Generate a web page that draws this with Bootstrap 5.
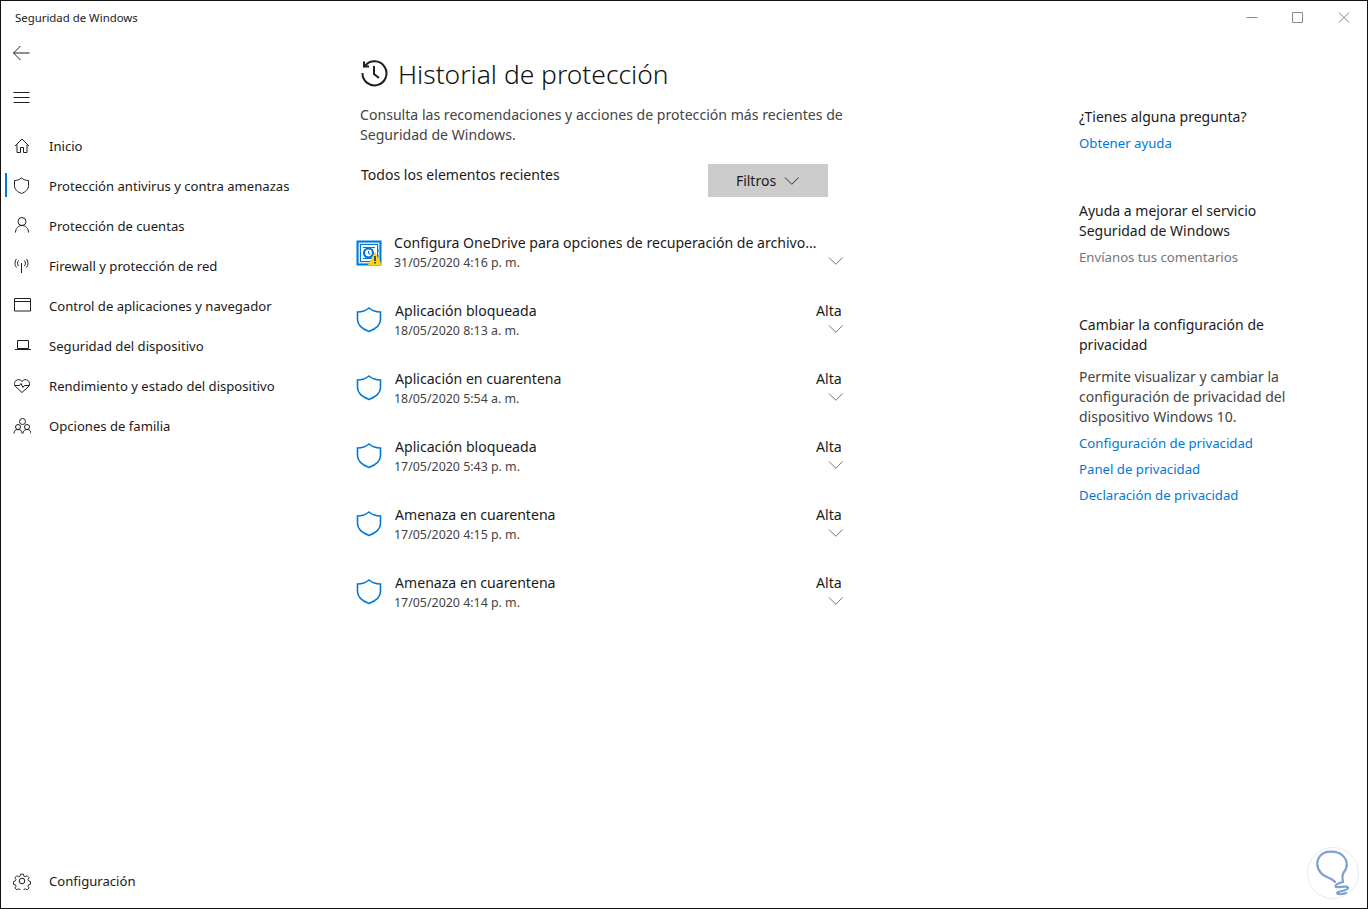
<!doctype html>
<html lang="es"><head><meta charset="utf-8"><title>Seguridad de Windows</title>
<link href="https://cdn.jsdelivr.net/npm/bootstrap@5.3.0/dist/css/bootstrap.min.css" rel="stylesheet">
<style>
html,body{height:100%;margin:0;background:#fff}
body{font-family:"Noto Sans","Open Sans",sans-serif;font-size:13.1px;color:#1a1a1a;overflow:hidden}
.win{width:1368px;height:909px;border:1px solid #111;position:relative}
svg{display:block;fill:none;stroke-width:1}
.tbar{height:30px;padding-left:14px;font-size:11.4px;padding-top:9px;line-height:16px}
.winbtns{position:absolute;right:0;top:0;height:34px}
.winbtns svg{stroke:#8a8a8a}
.side{width:345px;flex:none}
.sicon{stroke:#1f1f1f}
.topbtn{height:44px;padding-left:11px}
.navlist{margin-top:7px}
.navrow{height:40px;position:relative;padding:10px 0 0 48px;line-height:20px}
.navico{position:absolute;left:12px;top:11px;width:18px;height:18px}
.navrow.on::before{content:"";position:absolute;left:4px;top:7px;width:2px;height:24px;background:#0078d7}
.navfoot{position:absolute;left:0;bottom:7px;width:100%}
.ctr{width:700px;flex:none;padding-left:14px;padding-top:22px}
.pgtitle{font-size:26.4px;line-height:36px;font-weight:300;color:#111;margin:0;padding-top:3px}
.ttl{gap:10px}
.ttlico{stroke-width:2}
.sub{width:500px;line-height:20px;color:#444;margin:13px 0 0;font-size:14.1px}
.filtbtn{width:120px;height:33px;background:#ccc;border:0;border-radius:0;color:#1a1a1a;font-size:14px;padding:0;margin-left:auto}
.filtrow{width:468px;margin-top:19px}
.lbl{font-size:14.050px;line-height:20px;padding:1px 0 0 1px}
.rows{margin-top:36px}
.item{width:488px;height:68px;position:relative;padding-left:35px}
.item.first{padding-left:34px}
.item .nm{font-size:14.1px;line-height:20px}
.item .dt{font-size:12.4px;line-height:20px;color:#444;margin-left:-1px}
.item.first .dt{margin-left:0}
.sev{position:absolute;left:456px;top:0;font-size:14.2px;line-height:20px}
.chev{position:absolute;left:468px;top:23px;stroke:#767676}
.ishield{position:absolute;left:-4px;top:6px;stroke:#0078d7}
.shld{stroke-width:1.6;top:5px}
.rcol{width:260px;flex:none;margin-left:33px;padding-top:76px;font-size:14px;line-height:20px}
.rcol a{color:#0078d7;text-decoration:none;display:block;height:26px;line-height:26px;font-size:13.2px}
.rcol .gr{color:#767676;font-size:13.2px;height:26px;line-height:26px;margin-top:3px}
.rcol .ds{color:#444;margin-top:12px}
.rcol .lk1{margin-top:3px}
.blk{margin-bottom:45px}
.wm{position:absolute;left:1306px;top:846px}
</style></head><body>
<div class="win">
 <div class="tbar">Seguridad de Windows</div>
 <div class="winbtns d-flex">
  <svg width="148" height="34" viewBox="0 0 148 34"><path d="M27.500 16.500h11M73.500 11.500h10v10h-10zM120 11.500l10 10M130 11.500l-10 10"/></svg>
 </div>
 <div class="d-flex">
  <div class="side">
   <div class="topbtn d-flex align-items-center"><svg class="sicon" width="18" height="18" viewBox="0 0 18 18"><path d="M1.500 9h16M8.500 2l-7 7 7 7"/></svg></div>
   <div class="topbtn d-flex align-items-center"><svg class="sicon" width="18" height="18" viewBox="0 0 18 18"><path d="M1.500 4.500h16M1.500 9.500h16M1.500 14.500h16"/></svg></div>
   <div class="navlist">
    <div class="navrow"><svg class="navico sicon" viewBox="0 0 18 18"><path d="M2 9 9 2l7 7M4 7.500V15.500H7.500V10.500h3v5H14V7.500"/></svg>Inicio</div>
    <div class="navrow on"><svg class="navico sicon" viewBox="0 0 18 18"><path d="M8.500 1C6.500 2.700 4 3.500 1.500 3.500v5c0 4 3 6.500 7 8 4-1.500 7-4 7-8v-5c-2.500 0-5-.8-7-2.500z"/></svg>Protección antivirus y contra amenazas</div>
    <div class="navrow"><svg class="navico sicon" viewBox="0 0 18 18"><circle cx="9" cy="4.500" r="4"/><path d="M2.500 15.500c0-4 3-7 6.500-7s6.500 3 6.500 7"/></svg>Protección de cuentas</div>
    <div class="navrow"><svg class="navico sicon" viewBox="0 0 18 18"><path d="M8.500 6v10M5.500 3.500c-1.200 1.500-1.200 4 0 5.500M3.500 2c-2 2.500-2 6 0 8.500M11.500 3.500c1.200 1.500 1.200 4 0 5.500M13.500 2c2 2.500 2 6 0 8.500"/></svg>Firewall y protección de red</div>
    <div class="navrow"><svg class="navico sicon" viewBox="0 0 18 18"><path d="M1.500 1.500h16v12.500h-16zM1.500 4.500h16"/></svg>Control de aplicaciones y navegador</div>
    <div class="navrow"><svg class="navico sicon" viewBox="0 0 18 18"><path d="M4.500 3.500h11v8h-11zM2 12.500h16"/></svg>Seguridad del dispositivo</div>
    <div class="navrow"><svg class="navico sicon" viewBox="0 0 18 18"><path d="M9 15.500 3 10C1 8 1 5 3 3.500c2-1.500 4.500-1 6 1 1.500-2 4-2.500 6-1 2 1.500 2 4.500 0 6.500zM1.500 8.500h5l1.500-2 2 4 1.500-2h5"/></svg>Rendimiento y estado del dispositivo</div>
    <div class="navrow"><svg class="navico sicon" viewBox="0 0 18 18"><circle cx="9.500" cy="4.500" r="3"/><circle cx="5" cy="10" r="2.500"/><circle cx="14" cy="10" r="2.500"/><path d="M1 16.500c0-2.500 1.500-4 4-4s4 1.500 4 4M10 16.500c0-2.500 1.500-4 4-4s4 1.500 4 4"/></svg>Opciones de familia</div>
   </div>
  </div>
  <div class="ctr">
   <div class="ttl d-flex align-items-center">
    <svg class="sicon ttlico" width="28" height="28" viewBox="0 0 28 28"><path d="M5 7A12 12 0 1 1 2.500 14M4 2.500V7.500H9M14 7v8l5 4"/></svg>
    <h1 class="pgtitle">Historial de protección</h1>
   </div>
   <p class="sub">Consulta las recomendaciones y acciones de protección más recientes de Seguridad de Windows.</p>
   <div class="filtrow d-flex align-items-start">
    <div class="lbl">Todos los elementos recientes</div>
    <button class="filtbtn btn d-flex align-items-center justify-content-center gap-2">Filtros <svg width="16" height="10" viewBox="0 0 16 10" stroke="#333"><path d="M1 1.500 7.800 8.300l6.800-6.800"/></svg></button>
   </div>
   <div class="rows">
    <div class="item first">
     <svg class="ishield" width="28" height="28" viewBox="0 0 28 28"><rect x="1.500" y="2.500" width="23" height="23" fill="#cfe6f8" stroke-width="2"/><rect x="4.500" y="5.500" width="17" height="17" fill="#fff"/><path d="M7 8.500h12M7 19.500h12M22 10v3M22 16v3" /><circle cx="12.500" cy="14" r="4.500" stroke-width="2.200"/><path d="M12.500 12v2.500l2 1" stroke-width="1"/><path d="M19 13 12 26h14z" fill="#fcd116" stroke="none"/><path d="M19 17v5M19 23v1.500" stroke="#222" stroke-width="1.500"/></svg>
     <div class="nm">Configura OneDrive para opciones de recuperación de archivo...</div><div class="dt">31/05/2020 4:16 p. m.</div>
     <svg class="chev" width="16" height="10" viewBox="0 0 16 10"><path d="M1 1.500 7.800 8.300l6.800-6.800"/></svg>
    </div>
    <div class="item"><svg class="ishield shld" width="28" height="28" viewBox="0 0 28 28"><path d="M13 2C10 4.500 5.500 6 1.500 6v7.500c0 5.500 5 9.500 11.500 12 6.500-2.500 11.500-6.500 11.500-12V6C20.500 6 16 4.500 13 2z"/></svg><div class="nm">Aplicación bloqueada</div><div class="dt">18/05/2020 8:13 a. m.</div><div class="sev">Alta</div><svg class="chev" width="16" height="10" viewBox="0 0 16 10"><path d="M1 1.500 7.800 8.300l6.800-6.800"/></svg></div>
    <div class="item"><svg class="ishield shld" width="28" height="28" viewBox="0 0 28 28"><path d="M13 2C10 4.500 5.500 6 1.500 6v7.500c0 5.500 5 9.500 11.500 12 6.500-2.500 11.500-6.500 11.500-12V6C20.500 6 16 4.500 13 2z"/></svg><div class="nm">Aplicación en cuarentena</div><div class="dt">18/05/2020 5:54 a. m.</div><div class="sev">Alta</div><svg class="chev" width="16" height="10" viewBox="0 0 16 10"><path d="M1 1.500 7.800 8.300l6.800-6.800"/></svg></div>
    <div class="item"><svg class="ishield shld" width="28" height="28" viewBox="0 0 28 28"><path d="M13 2C10 4.500 5.500 6 1.500 6v7.500c0 5.500 5 9.500 11.500 12 6.500-2.500 11.500-6.500 11.500-12V6C20.500 6 16 4.500 13 2z"/></svg><div class="nm">Aplicación bloqueada</div><div class="dt">17/05/2020 5:43 p. m.</div><div class="sev">Alta</div><svg class="chev" width="16" height="10" viewBox="0 0 16 10"><path d="M1 1.500 7.800 8.300l6.800-6.800"/></svg></div>
    <div class="item"><svg class="ishield shld" width="28" height="28" viewBox="0 0 28 28"><path d="M13 2C10 4.500 5.500 6 1.500 6v7.500c0 5.500 5 9.500 11.500 12 6.500-2.500 11.500-6.500 11.500-12V6C20.500 6 16 4.500 13 2z"/></svg><div class="nm">Amenaza en cuarentena</div><div class="dt">17/05/2020 4:15 p. m.</div><div class="sev">Alta</div><svg class="chev" width="16" height="10" viewBox="0 0 16 10"><path d="M1 1.500 7.800 8.300l6.800-6.800"/></svg></div>
    <div class="item"><svg class="ishield shld" width="28" height="28" viewBox="0 0 28 28"><path d="M13 2C10 4.500 5.500 6 1.500 6v7.500c0 5.500 5 9.500 11.500 12 6.500-2.500 11.500-6.500 11.500-12V6C20.500 6 16 4.500 13 2z"/></svg><div class="nm">Amenaza en cuarentena</div><div class="dt">17/05/2020 4:14 p. m.</div><div class="sev">Alta</div><svg class="chev" width="16" height="10" viewBox="0 0 16 10"><path d="M1 1.500 7.800 8.300l6.800-6.800"/></svg></div>
   </div>
  </div>
  <div class="rcol">
   <div class="blk"><div>¿Tienes alguna pregunta?</div><a class="lk1" href="#">Obtener ayuda</a></div>
   <div class="blk"><div>Ayuda a mejorar el servicio<br>Seguridad de Windows</div><div class="gr">Envíanos tus comentarios</div></div>
   <div><div>Cambiar la configuración de<br>privacidad</div><div class="ds">Permite visualizar y cambiar la<br>configuración de privacidad del<br>dispositivo Windows 10.</div><a class="lk1" href="#">Configuración de privacidad</a><a href="#">Panel de privacidad</a><a href="#">Declaración de privacidad</a></div>
  </div>
 </div>
 <div class="navrow navfoot"><svg class="navico sicon" viewBox="0 0 18 18"><circle cx="9" cy="9" r="2.800"/><path transform="translate(9 9) scale(.92) translate(-9 -9)" d="M7.500 1.500h3l.5 2.200 1.700.7 1.900-1.200 2.100 2.100-1.200 1.900.7 1.700 2 .6v3l-2 .5-.7 1.700 1.200 1.900-2.100 2.100-1.900-1.200-1.700.7-.5 2H7.500l-.5-2-1.700-.7-1.900 1.200-2.100-2.100 1.200-1.900-.7-1.700-2-.5v-3l2-.6.7-1.700-1.200-1.900 2.100-2.100 1.900 1.200 1.700-.7z"/></svg>Configuración</div>
 <svg class="wm" width="54" height="54" viewBox="0 0 54 54"><circle cx="26" cy="26" r="25.500" fill="#fff" fill-opacity=".8" stroke="#e6eaf4"/><path d="M28 35C24 30 18 31 14 26 9 20 9 13 14 8 18 4 29 3 35 8 41 13 41 20 37 25 34 29 36 33 36 35 32 36 27 38 29 40 32 41 41 38 41 41 41 44 30 44 30 46 31 48 36 47 39 46" stroke="#7f9fd4" stroke-width="2.200" stroke-linecap="round"/></svg>
</div>
<script src="https://cdn.jsdelivr.net/npm/bootstrap@5.3.0/dist/js/bootstrap.bundle.min.js"></script>
</body></html>
